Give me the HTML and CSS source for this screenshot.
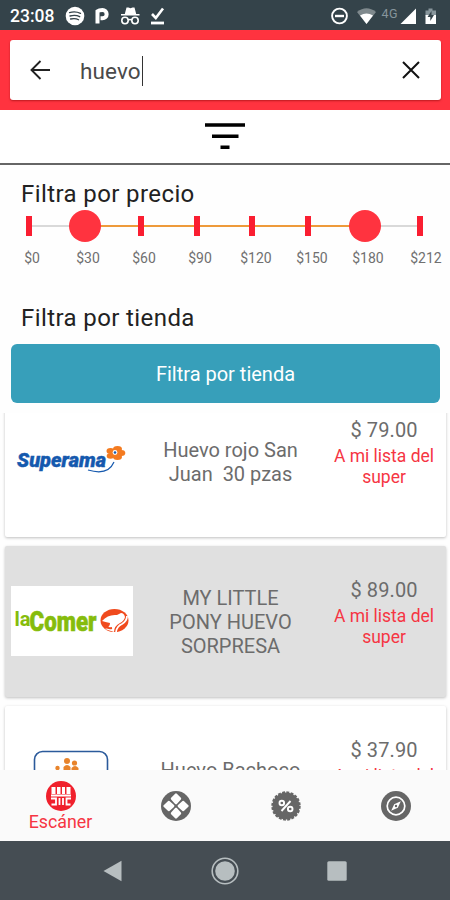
FILE: index.html
```html
<!DOCTYPE html>
<html lang="es">
    <head>
        <meta charset="utf-8">
        <title>Huevo</title>
        <link rel="stylesheet" href="styles.css">
    </head>
    <body>
        <div class="status">
            <span class="clock">23:08</span>
            <svg class="status-left" width="102" height="20" viewBox="0 0 102 20">
                <circle cx="10" cy="10" r="9.3" fill="#fff"/>
                <path d="M4.5 6.6q6-1.7 11 .8M5 10q5.500-1.500 9.700.7M5.600 13q4.500-1.200 8 .7" fill="none" stroke="#34434a" stroke-width="1.300" stroke-linecap="round"/>
                <path d="M32.500 17.500V5.200q1.500-1.200 5-1.200a4 4 0 0 1 0 8.300h-2" fill="none" stroke="#fff" stroke-width="4"/>
                <path d="M56 9.500h18.500v-1.500h-3.300l-1.700-6.500h-2l-2 .7-2-.7h-2l-1.700 6.500h-3.800z" fill="#fff"/>
                <g fill="none" stroke="#fff" stroke-width="1.600">
                    <circle cx="60" cy="14.500" r="3.200"/>
                    <circle cx="70" cy="14.500" r="3.200"/>
                    <path d="M63 14q2-1 4 0"/>
                </g>
                <path d="M87 8l3.800 4L98 2.500" fill="none" stroke="#fff" stroke-width="2.600"/>
                <path d="M86 17h13" stroke="#fff" stroke-width="2.800"/>
            </svg>
            <svg class="status-right" width="108" height="20" viewBox="0 0 108 20">
                <circle cx="9.500" cy="10" r="7.400" fill="none" stroke="#fff" stroke-width="1.900"/>
                <path d="M5 10h9" stroke="#fff" stroke-width="2.400"/>
                <path d="M27 6q9.500-7.500 19 0L36.500 18z" fill="#7f898d"/>
                <path d="M30 9.500q6.500-4.200 13 0L36.500 18z" fill="#fff"/>
                <text x="51.500" y="11.500" class="net">4G</text>
                <path d="M70.500 18H86V2.500z" fill="#fff"/>
                <path d="M95.500 4.500h3v-2h4v2h3.500v5H95.500z" fill="#87959b"/>
                <path d="M95.500 9h10.500v9H95.500z" fill="#fff"/>
                <path d="M101.500 5l-4 6h2.800v4l3.700-6h-2.500z" fill="#34434a"/>
            </svg>
        </div>
        <header class="header">
            <div class="search">
                <svg width="24" height="24" viewBox="0 0 24 24"><path d="M22 12H4M12.500 3L3.500 12l9 9" fill="none" stroke="#222" stroke-width="1.900"/></svg>
                <span class="query">huevo</span>
                <svg class="clear" width="20" height="20" viewBox="0 0 20 20"><path d="M2 2l16 16M18 2L2 18" fill="none" stroke="#111" stroke-width="2"/></svg>
            </div>
        </header>
        <div class="filter-bar">
            <svg width="40" height="28" viewBox="0 0 40 28"><path d="M0 1.200h40v3.600H0zM7 12.400h26.500V16H7zM15.500 23.500h9v3.600h-9z" fill="#000"/></svg>
        </div>
        <section class="filters">
            <h2>Filtra por precio</h2>
            <div class="slider">
                <i class="tick"></i>
                <i class="thumb"></i>
                <i class="tick"></i>
                <i class="tick"></i>
                <i class="tick"></i>
                <i class="tick"></i>
                <i class="thumb thumb-max"></i>
                <i class="tick"></i>
            </div>
            <div class="labels">
                <span>$0</span><span>$30</span><span>$60</span><span>$90</span><span>$120</span><span>$150</span><span>$180</span><span class="last">$212</span>
            </div>
            <h2 class="store-title">Filtra por tienda</h2>
            <button class="store-btn">Filtra por tienda</button>
        </section>
        <main class="list">
            <article class="card">
                <div class="logo">
                    <svg width="122" height="40" viewBox="0 0 122 40">
                        <text x="6" y="26" class="superama" textLength="89" lengthAdjust="spacingAndGlyphs">Superama</text>
                        <path d="M77 29q20 6 26-8" fill="none" stroke="#1559ae" stroke-width="1.200"/>
                        <g fill="#f47b20">
                            <ellipse cx="99.500" cy="10" rx="4" ry="3"/>
                            <ellipse cx="106.500" cy="8" rx="4.500" ry="3"/>
                            <ellipse cx="110.500" cy="12" rx="3.800" ry="3"/>
                            <ellipse cx="106.500" cy="16" rx="4.500" ry="3"/>
                            <ellipse cx="99.500" cy="15" rx="3.800" ry="2.800"/>
                            <ellipse cx="104" cy="12" rx="5" ry="4"/>
                        </g>
                        <circle cx="104" cy="11.500" r="2.400" fill="#fff"/>
                        <circle cx="104" cy="11.500" r="1.300" fill="#1559ae"/>
                    </svg>
                </div>
                <p class="name">Huevo rojo San<br>Juan&nbsp; 30 pzas</p>
                <div class="buy">
                    <p class="price">$ 79.00</p>
                    <a class="add">A mi lista del super</a>
                </div>
            </article>
            <article class="card selected">
                <div class="logo">
                    <svg width="122" height="70" viewBox="0 0 122 70">
                        <path d="M0 0h122v70H0z" fill="#fff"/>
                        <text y="40" class="comer-la"><tspan x="3.500">la</tspan><tspan x="18.500" y="45" class="comer" textLength="67" lengthAdjust="spacingAndGlyphs">Comer</tspan></text>
                        <ellipse cx="103.500" cy="34.500" rx="14" ry="11.500" fill="#f04a1d"/>
                        <path d="M91 35q6-7 15-6l4-2q3 0 4 4-1 4-5 6-6 3-6 9l-9-3q5-2 5-6-5-1-8-2z" fill="#fff"/>
                        <path d="M105 46q1-6 6-8 5-3 5-8" fill="none" stroke="#fff" stroke-width="1.800"/>
                        <path d="M92 38q3 5 9 4" fill="none" stroke="#f04a1d" stroke-width="2"/>
                    </svg>
                </div>
                <p class="name">MY LITTLE<br>PONY HUEVO<br>SORPRESA</p>
                <div class="buy">
                    <p class="price">$ 89.00</p>
                    <a class="add">A mi lista del super</a>
                </div>
            </article>
            <article class="card">
                <div class="logo">
                    <svg width="122" height="70" viewBox="0 0 122 70">
                        <rect x="23.500" y="5.500" width="73" height="62" rx="8" fill="#fff" stroke="#2b5a9b" stroke-width="1.600"/>
                        <g fill="#e8842c">
                            <circle cx="46.500" cy="22" r="2.200"/>
                            <circle cx="56" cy="15" r="3"/>
                            <circle cx="63.500" cy="17" r="2.600"/>
                            <path d="M43 32v-5q3.500-4 7 0v5zM52.500 27v-6q3.500-4 7 0v6zM60.500 28v-6q3.500-4 7 0v6z"/>
                        </g>
                    </svg>
                </div>
                <p class="name">Huevo Bachoco<br>&nbsp;</p>
                <div class="buy">
                    <p class="price">$ 37.90</p>
                    <a class="add">A mi lista del super</a>
                </div>
            </article>
        </main>
        <nav class="tabs">
            <a class="tab active">
                <svg width="30" height="30" viewBox="0 0 30 30">
                    <circle cx="15" cy="15" r="15" fill="#f0202c"/>
                    <path d="M5.500 6h4v7h-4zM11 6h3.500v7H11zM16 6h3v7h-3zM20.500 6h4v7h-4z" fill="#fff"/>
                    <path d="M5 14.500h20M5 17.500h5v6H5.500M13.500 17v7M17 17v7M25 17.500h-4.500v6h4" fill="none" stroke="#fff" stroke-width="1.800"/>
                </svg>
                <span>Escáner</span>
            </a>
            <a class="tab">
                <svg width="30" height="30" viewBox="0 0 30 30">
                    <circle cx="15" cy="15" r="15" fill="#666"/>
                    <path d="M15 3.500l4 4.200-4 4.500-4-4.500zM15 26.500l4-4.200-4-4.500-4 4.500zM3.500 15l4.200-4 4.500 4-4.500 4zM26.500 15l-4.200-4-4.500 4 4.500 4z" fill="#fff" stroke="#fff" stroke-width="2.400" stroke-linejoin="round"/>
                </svg>
            </a>
            <a class="tab">
                <svg width="30" height="30" viewBox="0 0 30 30">
                    <circle cx="15" cy="15" r="13.500" fill="#666"/>
                    <circle cx="15" cy="15" r="13.600" fill="none" stroke="#666" stroke-width="2.200" stroke-dasharray="2.900 1.372"/>
                    <g fill="none" stroke="#fff" stroke-width="1.900">
                        <circle cx="10.800" cy="12" r="2.300"/>
                        <circle cx="19.200" cy="18" r="2.300"/>
                        <path d="M19.500 10L10.500 20"/>
                    </g>
                </svg>
            </a>
            <a class="tab">
                <svg width="30" height="30" viewBox="0 0 30 30">
                    <circle cx="15" cy="15" r="15" fill="#666"/>
                    <circle cx="15" cy="15" r="8.800" fill="none" stroke="#fff" stroke-width="1.700"/>
                    <path d="M19.800 10.200l-3 6.600-6.600 3 3-6.600z" fill="#fff"/>
                    <circle cx="15" cy="15" r="1.200" fill="#666"/>
                </svg>
            </a>
        </nav>
        <div class="navbar">
            <svg width="20" height="22" viewBox="0 0 20 22"><path d="M.5 11L18.500.8v20.400z" fill="#b7bec0"/></svg>
            <svg width="28" height="28" viewBox="0 0 28 28">
                <circle cx="14" cy="14" r="12.800" fill="none" stroke="#b7bec0" stroke-width="1.600"/>
                <circle cx="14" cy="14" r="9.800" fill="#b7bec0"/>
            </svg>
            <svg width="20" height="20" viewBox="0 0 20 20"><rect x=".3" y=".3" width="19.400" height="19.400" rx="1.500" fill="#b7bec0"/></svg>
        </div>
    </body>
</html>
```
FILE: styles.css
```css
*{
    box-sizing: border-box;
}
body{
    margin: 0;
    width: 450px;
    height: 900px;
    overflow: hidden;
    display: flex;
    flex-direction: column;
    background-color: #fefefe;
    font-family: Roboto, "Liberation Sans", sans-serif;
}
h2, p{
    margin: 0;
    font-weight: 400;
}
svg{
    display: block;
    flex: none;
}
.status{
    height: 30px;
    flex: none;
    display: flex;
    align-items: center;
    padding: 1px 12px 0 10px;
    background-color: #34434a;
    color: #fff;
}
.clock{
    width: 55px;
    font-size: 17.5px;
    font-weight: 500;
}
.status-right{
    margin-left: auto;
}
.net{
    font-size: 12.5px;
    letter-spacing: 0.5px;
    fill: #87959b;
}
.header{
    height: 80px;
    flex: none;
    padding: 10px 9px 10px 10px;
    background-color: #ff333f;
}
.search{
    height: 60px;
    display: flex;
    align-items: center;
    padding: 0 20px 0 18px;
    border-radius: 3px;
    background-color: #fff;
    box-shadow: 0 1px 2px rgba(120, 0, 0, 0.5);
}
.query{
    margin: 1px 0 0 28px;
    padding-right: 1px;
    border-right: 1.5px solid #333;
    font-size: 22.5px;
    line-height: 30px;
    letter-spacing: 0.1px;
    color: #4a4a4a;
}
.clear{
    margin-left: auto;
}
.filter-bar{
    height: 55px;
    flex: none;
    display: flex;
    justify-content: center;
    align-items: flex-start;
    padding-top: 12px;
    border-bottom: 2px solid #666;
    background-color: #fff;
}
.filters{
    height: 248px;
    flex: none;
    padding: 14px 10px 0;
}
.filters h2{
    padding-left: 11px;
    font-size: 24px;
    line-height: 30px;
    letter-spacing: 0.4px;
    color: #222;
}
.slider{
    height: 32px;
    margin: 1px 17px 0 16px;
    display: flex;
    justify-content: space-between;
    align-items: center;
    background: linear-gradient(to right, #d9d9d9 15%, #ee9a3a 15%, #ee9a3a 85%, #d9d9d9 85%) center / 100% 2px no-repeat;
}
.tick{
    width: 6px;
    height: 20px;
    background-color: #fa1e31;
}
.thumb{
    width: 32px;
    height: 32px;
    margin: 0 -13px;
    border-radius: 50%;
    background-color: #ff333f;
}
.thumb-max{
    margin: 0 -14px 0 -12px;
}
.labels{
    display: flex;
    margin: 8px -20px 0 -6px;
    font-size: 14px;
    line-height: 16px;
    color: #707070;
}
.labels span{
    width: 56px;
    flex: none;
    text-align: center;
}
.labels .last{
    padding-left: 4px;
}
.filters .store-title{
    margin-top: 37px;
}
.store-btn{
    display: block;
    width: 429px;
    height: 59px;
    margin: 11px 0 0 1px;
    border: 0;
    border-radius: 6px;
    background-color: #379fba;
    color: #fff;
    font-family: inherit;
    font-size: 20px;
}
.list{
    height: 357px;
    flex: none;
    overflow: hidden;
    display: flex;
    flex-direction: column;
    gap: 9px;
    padding: 0 4px 0 5px;
}
.card{
    height: 151px;
    flex: none;
    display: flex;
    align-items: center;
    padding: 0 6px;
    border-radius: 2px;
    background-color: #fff;
    box-shadow: 0 1px 3px rgba(0, 0, 0, 0.25);
}
.card:first-child{
    margin-top: -27px;
}
.selected{
    background-color: #e0e0e0;
}
.logo{
    width: 122px;
    flex: none;
    padding-bottom: 2px;
}
.superama{
    font: italic 900 20px Roboto, sans-serif;
    fill: #1559ae;
    stroke: #1559ae;
    stroke-width: 0.4px;
}
.comer-la{
    font: 700 20px Roboto, sans-serif;
    fill: #86bc0c;
}
.comer{
    font-size: 28px;
    font-weight: 900;
    stroke: #86bc0c;
    stroke-width: 0.6px;
}
.name{
    width: 194px;
    flex: none;
    padding-left: 1px;
    text-align: center;
    font-size: 20px;
    line-height: 24px;
    color: #6c6c6c;
}
.buy{
    width: 114px;
    height: 151px;
    flex: none;
    padding-top: 32px;
    text-align: center;
}
.price{
    font-size: 20px;
    line-height: 24px;
    letter-spacing: 0.1px;
    color: #6c6c6c;
}
.add{
    display: block;
    margin: 4px 4px 0;
    font-size: 17.5px;
    line-height: 20.5px;
    color: #f63543;
}
.tabs{
    height: 71px;
    flex: none;
    display: flex;
    background-color: #fafafa;
}
.tab{
    width: 110px;
    flex: none;
    display: flex;
    flex-direction: column;
    align-items: center;
    justify-content: center;
}
.tab:first-child{
    width: 121px;
}
.tab:nth-child(4){
    width: 109px;
}
.active{
    color: #f63543;
    font-size: 17.8px;
    line-height: 21px;
    padding-top: 1px;
}
.navbar{
    height: 59px;
    flex: none;
    display: flex;
    align-items: center;
    justify-content: space-between;
    padding: 0 103px;
    background-color: #454d53;
}
```
